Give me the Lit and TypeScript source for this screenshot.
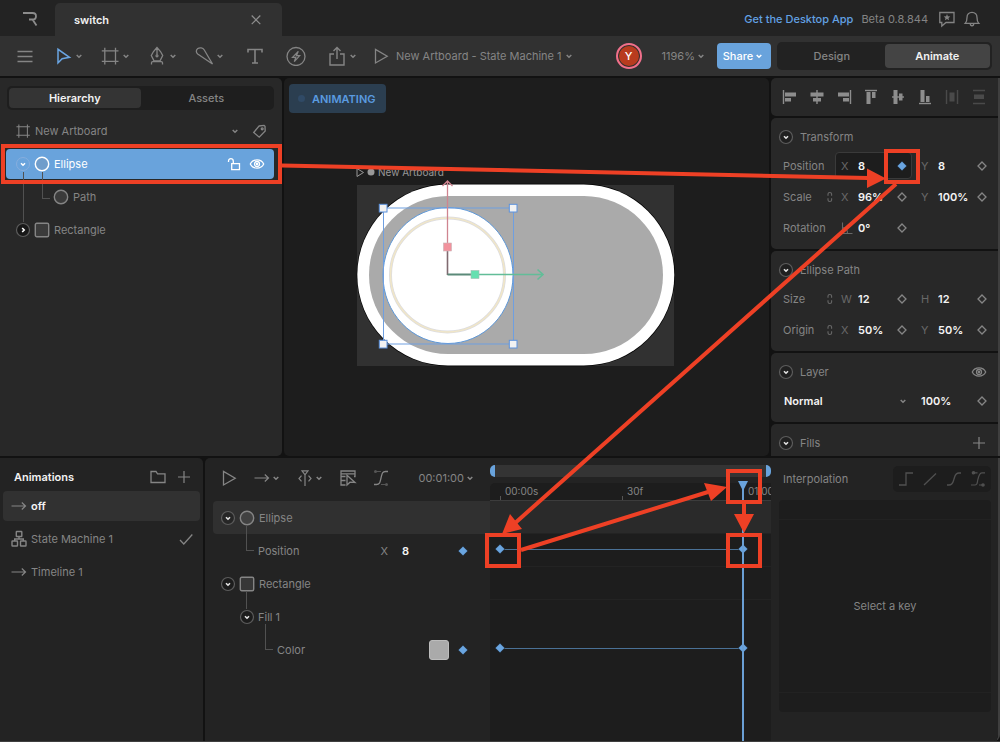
import { LitElement, html, svg, css } from "lit";
import { customElement } from "lit/decorators.js";
import { classMap } from "lit/directives/class-map.js";

const glyphs: Record<string, unknown> = {
  menu: svg`<path d="M2.5 5.500h15M2.5 10.500h15M2.5 15.500h15" stroke-width="1.300" />`,
  cursor: svg`<path d="M5 3.300v13.700l4.100-4.200 7.400-1.500z" stroke="#6aa5e2" stroke-width="1.500" />`,
  artboard: svg`<path d="M1.800 4.800h16.700M1.800 15.300h16.700M4.800 1.800v16.700M15.500 1.800v16.700" stroke-width="1.300" />`,
  pen: svg`<path d="M10 1.500 6.500 5.500 4.300 9.500l2.700 5.300h6l2.700-5.300-2.200-4zM10 1.500v7.300M4.500 18.500v-1.700q0-1.200 1.200-1.200h8.600q1.200 0 1.200 1.200v1.700" stroke-width="1.300" /><circle cx="10" cy="9.800" r="1" stroke-width="1.200" />`,
  brush: svg`<path d="M18.500 18 10.300 4C8.800 1.600 5.700 1.200 3.800 2.600 1.800 4.100 1.900 6.600 3.700 8.100z" stroke-width="1.300" />`,
  text: svg`<path d="M3 6.500V3.500h14v3M10 3.500v13.500M7 17h6" stroke-width="1.600" />`,
  bolt: svg`<circle cx="10" cy="10.500" r="9" stroke-width="1.300" /><path d="M12.300 5.300 6.500 11.300h3.300L8.300 15.700l5.400-6h-3.300z" stroke-width="1.200" />`,
  share: svg`<path d="M7 8H3v11h14V8h-4M10 13V1.500M6.500 5 10 1.500 13.500 5" />`,
  play: svg`<path d="M4.500 3.500v13.500l11.700-6.700z" stroke-width="1.300" />`,
  close: svg`<path d="m5.700 5.500 8.600 8.600m0-8.600-8.600 8.600" stroke-width="1.200" />`,
  chat: svg`<path d="M2.800 3.500h14.200v10H9L4.800 17v-3.500h-2z" stroke-width="1.300" /><path d="m10 5 .9 2.200 2.400.2-1.800 1.500.6 2.300L10 9.900l-2.100 1.300.6-2.300-1.800-1.500 2.400-.2z" fill="currentColor" stroke="none" />`,
  bell: svg`<path d="M3.300 14.300c1.500-1.500 1.700-3 1.700-5.800 0-3 2.100-5.200 5-5.200s5 2.200 5 5.200c0 2.800.2 4.300 1.700 5.800zM8.300 14.800c0 2.600 3.400 2.600 3.400 0" stroke-width="1.300" />`,
  tag: svg`<path d="m10 5 5-.600 1 1 .2 4.600-6 6.200L4.700 11.500z" stroke-width="1.300" /><circle cx="13.200" cy="7.800" r=".9" />`,
  lock: svg`<path d="M7.700 9.700H15.500v6H7.700zM9.300 9.500V7.200c0-3.400-4.800-3.400-4.800 0v.800" stroke-width="1.300" />`,
  eye: svg`<path d="M3.300 10C6 4.500 14 4.500 16.700 10 14 15.500 6 15.500 3.300 10z" stroke-width="1.300" /><circle cx="10" cy="10" r="2.500" stroke-width="1.300" /><circle cx="10" cy="10" r=".6" />`,
  circle: svg`<circle cx="10" cy="10" r="6.700" fill="#8883" />`,
  square: svg`<rect x="3.300" y="3.300" width="13.400" height="13.400" rx="1.500" fill="#8883" />`,
  link: svg`<path d="M8 8.800V7q0-1.500 1.800-1.500T11.600 7v1.800M8 11.200V13q0 1.500 1.800 1.500t1.800-1.500v-1.800" stroke-width="1.100" />`,
  angle: svg`<path d="M5.500 4.500v11h10M5.500 9.500q5 0 5 6" stroke-width="1.100" />`,
  plus: svg`<path d="M10 4v12M4 10h12" stroke-width="1.200" />`,
  folder: svg`<path d="M3 15.500v-11h5l1.500 2.300h7.500v8.700z" stroke-width="1.300" />`,
  arrow: svg`<path d="M2.500 10h14M12.800 6.500l3.700 3.500-3.700 3.500" stroke-width="1.200" />`,
  machine: svg`<rect x="7.300" y="2.500" width="5.500" height="5" rx=".5" /><rect x="3" y="12" width="5.500" height="5" rx=".5" /><rect x="11.500" y="12" width="5.500" height="5" rx=".5" /><path d="M10 7.500V10M5.700 12v-2h8.600v2" />`,
  check: svg`<path d="m4 11 3.800 4L16.300 5.500" stroke-width="1.300" />`,
  snap: svg`<path d="M7 2.800h6l-3 4zM10 6v12M6.500 7.700 4 10.500l2.500 2.800M13.500 7.700l2.500 2.800-2.500 2.800" stroke-width="1.200" />`,
  keys: svg`<path d="M7.500 8.500h-4.500V3h14v5.500h-1M3 5.800h14M7.500 12.500H3M7.500 17H3V8.500" stroke-width="1.300" /><path d="M9 7.300v9.700l3-2.800 5 .300z" stroke-width="1.300" />`,
  curve: svg`<path d="M3 16.500h2.500c3.500 0 3.500-2.500 4.500-6.500s1-6.500 4.500-6.500h2.500" stroke-width="1.300" /><path d="M5 3.500h5M10 16.500h5" stroke="#555" stroke-width="1" /><circle cx="4.500" cy="3.500" r=".8" stroke="#555" /><circle cx="15.500" cy="16.500" r=".8" stroke="#555" />`,
  step: svg`<path d="M3 16h7V4h7" stroke-width="1.300" />`,
  linear: svg`<path d="M4 16 16 4.500" stroke-width="1.300" />`,
  ease: svg`<path d="M3 16h2c4 0 4-3 5-6s1-6 5-6h2" stroke-width="1.300" />`,
  custom: svg`<path d="M3 16h4c3 0 2-3 3-6s1-6.200 4-6.200h3M5.500 3.800h4M11 16h4" stroke-width="1.200" /><circle cx="5.500" cy="3.800" r="1.100" fill="currentColor" /><circle cx="15" cy="16" r="1.100" fill="currentColor" />`,
  chevron: svg`<path d="m7.700 9 2.300 2.300L12.300 9" stroke-width="1.500" />`,
  diamond: svg`<path d="m10 6 4 4-4 4-4-4z" stroke-width="1.300" />`,
  key: svg`<path d="m10 5.200 4.800 4.800-4.800 4.800-4.800-4.800z" fill="#6aa5e0" stroke="#17202b" stroke-width=".6" />`,
  open: svg`<circle cx="10" cy="10" r="6.500" fill="#0003" stroke="#5c5c5c" stroke-width="1.200" /><path d="m8 9.200 2 2 2-2" stroke="#e4e4e4" stroke-width="1.600" />`,
  openLight: svg`<circle cx="10" cy="10" r="6.500" stroke="#86aede" stroke-width="1" /><path d="m8 9.200 2 2 2-2" stroke="#fff" stroke-width="1.500" />`,
  shut: svg`<circle cx="10" cy="10" r="6.500" fill="#0006" stroke="#5c5c5c" stroke-width="1.200" /><path d="m9.200 8 2 2-2 2" stroke="#fff" stroke-width="1.600" />`,
  alignLeft: svg`<path d="M3.500 3v14" /><path d="M5 5.500h11v4H5zM5 11h6v3.500H5z" class="f" />`,
  alignCenter: svg`<path d="M10 3v14" /><path d="M3.500 5.500h13v4h-13zM6 11h8v3.500H6z" class="f" />`,
  alignRight: svg`<path d="M16.500 3v14" /><path d="M4 5.500h11v4H4zM9 11h6v3.500H9z" class="f" />`,
  alignTop: svg`<path d="M4 3.500h12" /><path d="M5.500 5h4v12h-4zM11 5h3.500v6H11z" class="f" />`,
  alignMiddle: svg`<path d="M4 10h12" /><path d="M5.500 3h4v14h-4zM11 6.500h3.500v7H11z" class="f" />`,
  alignBottom: svg`<path d="M4 16.500h12" /><path d="M5.500 3h4v12h-4zM11 9h3.500v6H11z" class="f" />`,
  spreadH: svg`<path d="M4.500 3v14M15.500 3v14" /><path d="M7.500 5.500h5v9h-5z" class="f" />`,
  spreadV: svg`<path d="M4 3.500h12M4 16.500h12" /><path d="M5 7.500h10v4.500H5z" class="f" />`,
};

const icon = (name: string, cls = "") => html`<svg
  class="icon ${cls}"
  viewBox="0 0 20 20"
  aria-hidden="true"
>${glyphs[name]}</svg>`;

const chevron = () => icon("chevron", "chev");

const iconButton = (name: string, label: string, cls = "") =>
  html`<button class="ib ${cls}" aria-label=${label}>${icon(name)}</button>`;

const dropTool = (name: string, label: string) =>
  html`<button class="tool" aria-label=${label}>${icon(name)}${chevron()}</button>`;

const shared = css`
  * {
    box-sizing: border-box;
  }
  button,
  input,
  select {
    font: inherit;
    color: inherit;
    background: none;
    border: 0;
    padding: 0;
    margin: 0;
    border-radius: 0;
  }
  button {
    display: flex;
    align-items: center;
    white-space: nowrap;
  }
  .icon {
    width: 20px;
    height: 20px;
    flex: none;
    display: block;
    fill: none;
    stroke: currentColor;
    stroke-width: 1.4;
  }
  .icon .f {
    fill: currentColor;
    stroke: none;
  }
  .chev {
    width: 20px;
    margin: 0 -4px;
  }
  .spacer {
    flex: 1;
  }
  .seg {
    display: grid;
    grid-template-columns: 1fr 1fr;
    background: #1e1e1e;
    border-radius: 5px;
    padding: 2px;
  }
  .seg button {
    justify-content: center;
    border-radius: 4px;
    font-weight: 500;
  }
  .seg .on {
    color: #f2f2f2;
    background: #343434;
    font-weight: 600;
  }
`;

@customElement("top-bar")
class TopBar extends LitElement {
  static styles = [
    shared,
    css`
      :host {
        display: block;
      }
      .tabs {
        display: flex;
        height: 36px;
        background: #232323;
        padding: 2px 18px 0 0;
        align-items: center;
        color: #838383;
      }
      .home {
        width: 55px;
        justify-content: center;
        color: #8c8c8c;
        padding-left: 5px;
      }
      .tab {
        align-self: flex-end;
        display: flex;
        align-items: center;
        width: 227px;
        height: 33px;
        padding: 0 16px 0 19px;
        border-radius: 5px 5px 0 0;
        background: #313131;
        color: #f2f2f2;
        font-weight: 600;
      }
      .tab .ib {
        color: #8e8e8e;
      }
      .get {
        color: #62a1e4;
        text-decoration: none;
        font-weight: 500;
        margin-right: 8px;
      }
      .beta {
        margin-right: 9px;
      }
      .bell {
        margin-left: 5px;
      }
      .tools {
        display: flex;
        align-items: center;
        height: 40px;
        background: #313131;
        padding: 0 8px 0 15px;
        color: #858585;
      }
      .drops {
        display: flex;
        gap: 15px;
        margin: 0 19px 0 18px;
      }
      .plain {
        display: flex;
        gap: 21px;
        margin-right: 12px;
      }
      .pick {
        gap: 5px;
      }
      .pick .chev {
        margin-left: -8px;
      }
      .avatar {
        width: 26px;
        height: 26px;
        border-radius: 50%;
        border: 2px solid #f0708c;
        background: #b83b1e;
        box-shadow: inset 0 0 0 1px #313131;
        color: #fff;
        font-weight: 500;
        justify-content: center;
        margin-right: 20px;
      }
      .zoom {
        margin-right: 10px;
      }
      .share {
        height: 26px;
        width: 54px;
        justify-content: center;
        border-radius: 4px;
        background: #69a3dc;
        color: #fff;
        font-weight: 500;
        margin-right: 6px;
      }
      .seg {
        width: 215px;
        height: 28px;
        background: #222;
      }
      .seg .on {
        background: #444;
      }
    `,
  ];

  render() {
    return html`
      <header class="tabs">
        <button class="home" aria-label="Home">
          <svg class="icon" viewBox="0 0 20 20" aria-hidden="true">
            <path d="M3 4h9.500q3.500 0 3.500 3.200 0 3.300-3.500 3.300H9M12.500 10.500l4 6" stroke-width="1.800" />
          </svg>
        </button>
        <div class="tab"><span>switch</span><span class="spacer"></span>${iconButton("close", "Close tab")}</div>
        <span class="spacer"></span>
        <a class="get" href="#">Get the Desktop App</a>
        <span class="beta">Beta 0.8.844</span>
        ${iconButton("chat", "Feedback")}${iconButton("bell", "Notifications", "bell")}
      </header>
      <div class="tools">
        ${iconButton("menu", "Menu")}
        <div class="drops">
          ${dropTool("cursor", "Select")} ${dropTool("artboard", "Artboard")}
          ${dropTool("pen", "Pen")} ${dropTool("brush", "Bones")}
        </div>
        <div class="plain">
          ${iconButton("text", "Text")} ${iconButton("bolt", "Events")}
          ${dropTool("share", "Export")}
        </div>
        <button class="pick">${icon("play")}<span>New Artboard - State Machine 1</span>${chevron()}</button>
        <span class="spacer"></span>
        <button class="avatar">Y</button>
        <button class="zoom">1196%${chevron()}</button>
        <button class="share">Share${chevron()}</button>
        <div class="seg"><button>Design</button><button class="on">Animate</button></div>
      </div>
    `;
  }
}

@customElement("hierarchy-panel")
class HierarchyPanel extends LitElement {
  static styles = [
    shared,
    css`
      :host {
        display: flex;
        flex-direction: column;
        background: #282828;
        border-radius: 0 5px 5px 0;
        padding: 8px 8px 0 6px;
        color: #858585;
      }
      .seg {
        height: 24px;
        margin: 0 0 6px 1px;
      }
      .tree {
        display: flex;
        flex-direction: column;
        gap: 3px;
      }
      .row {
        position: relative;
        display: flex;
        align-items: center;
        height: 30px;
        padding: 0 7px;
        border-radius: 4px;
      }
      .row.sel {
        background: #69a3dc;
        color: #fff;
      }
      .child {
        padding-left: 45px;
      }
      .small {
        width: 16px;
        height: 16px;
        margin: 0 1px 0 2px;
      }
      .fold {
        margin-right: -1px;
      }
      .name {
        margin-left: 2px;
      }
      .small + .name {
        margin-left: 3px;
      }
      .end {
        margin-left: 3px;
      }
      .tag {
        margin: 0 -2px 0 8px;
      }
      .child::before {
        content: "";
        position: absolute;
        left: 17px;
        top: -10px;
        height: 50px;
        border-left: 1px solid #515151;
      }
      .child::after {
        content: "";
        position: absolute;
        left: 36px;
        top: -10px;
        width: 7px;
        height: 26px;
        border: solid #515151;
        border-width: 0 0 1px 1px;
      }
    `,
  ];

  render() {
    return html`
      <div class="seg"><button class="on">Hierarchy</button><button>Assets</button></div>
      <div class="tree">
        <div class="row">
          ${icon("artboard", "small")}<span class="name">New Artboard</span><span class="spacer"></span>
          <button aria-label="Artboard options">${chevron()}</button>
          ${iconButton("tag", "Tag", "tag")}
        </div>
        <div class="row sel">
          ${iconButton("openLight", "Collapse Ellipse", "fold")}${icon("circle")}<span class="name">Ellipse</span>
          <span class="spacer"></span>
          ${iconButton("lock", "Lock")}${iconButton("eye", "Visible", "end")}
        </div>
        <div class="row child">${icon("circle")}<span class="name">Path</span></div>
        <div class="row">
          ${iconButton("shut", "Expand Rectangle", "fold")}${icon("square")}<span class="name">Rectangle</span>
        </div>
      </div>
    `;
  }
}

@customElement("stage-view")
class StageView extends LitElement {
  static styles = [
    shared,
    css`
      :host {
        display: block;
        position: relative;
        overflow: hidden;
        background: #1d1d1d;
        border-radius: 5px;
        padding: 6px 5px;
      }
      .mode {
        display: inline-flex;
        align-items: center;
        gap: 7px;
        height: 29px;
        padding: 0 10px 0 9px;
        border-radius: 4px;
        background: #2b3e50;
        color: #5a9be0;
        font-weight: 600;
      }
      .dot {
        width: 7px;
        height: 7px;
        border-radius: 50%;
        background: #304a66;
      }
      .art {
        position: absolute;
        inset: 0;
        width: 100%;
        height: 100%;
        pointer-events: none;
      }
      .label {
        fill: #999;
        font-size: 10px;
      }
    `,
  ];

  render() {
    const handles = [
      [383, 208],
      [513, 208],
      [383, 344],
      [513, 344],
    ];
    return html`
      <div class="mode"><span class="dot"></span>ANIMATING</div>
      <svg class="art" role="img" aria-label="Switch artboard">
        <g transform="translate(-284 -78)" fill="none">
          <path d="M357 168.500v8l6.500-4z" stroke="#999" />
          <circle cx="371" cy="172" r="3.500" fill="#999" />
          <text class="label" x="378" y="176">New Artboard</text>
          <rect x="357" y="185" width="317" height="181" fill="#313131" />
          <rect x="356.700" y="183.700" width="318.300" height="182.600" rx="91.300" fill="#000" />
          <rect x="357.300" y="184.400" width="317" height="181.200" rx="90.600" fill="#fff" />
          <rect x="369" y="196" width="294" height="158" rx="79" fill="#aaa" />
          <ellipse cx="448" cy="275.500" rx="65" ry="68" fill="#fff" stroke="#5c97d8" />
          <circle cx="447.500" cy="275" r="57" stroke="#dcdce0" stroke-width="3" />
          <circle cx="447.500" cy="275" r="57" stroke="#f0e6c8" stroke-width="1.600" />
          <rect x="383.500" y="208" width="130" height="136" stroke="#6f9fe0" />
          ${handles.map(
            ([x, y]) => svg`<rect x=${x - 3.7} y=${y - 3.7} width="7.700" height="7.700" fill="#f2f2f2" stroke="#5c92dd" />`,
          )}
          <path d="M447.500 275v-24" stroke="#806a70" stroke-width="1.600" />
          <path d="M447.500 251v-70M442.500 186l5-5 5 5" stroke="#cf8490" stroke-width="1.300" />
          <path d="M447.500 274.500h26" stroke="#5b8a79" stroke-width="2" />
          <path d="M475 274.500h68M537.500 269.500l5.500 5-5.500 5" stroke="#62bd98" stroke-width="1.600" />
          <rect x="443.500" y="243" width="8" height="8" fill="#f2929d" stroke="#c9b5b8" stroke-width=".6" />
          <rect x="471" y="270.500" width="8" height="8" fill="#65e0b0" stroke="#a5bdb4" stroke-width=".6" />
        </g>
      </svg>
    `;
  }
}

type Field = { axis: string; value: string; keyed?: boolean };
type Prop = { name: string; link?: boolean; angle?: boolean; fields: Field[] };

@customElement("inspector-panel")
class InspectorPanel extends LitElement {
  static styles = [
    shared,
    css`
      :host {
        display: flex;
        flex-direction: column;
        gap: 2px;
        min-height: 0;
        overflow: hidden;
        color: #858585;
      }
      .card {
        flex: none;
        background: #282828;
        border-radius: 5px 0 0 5px;
        padding: 5px 6px 6px 12px;
      }
      .aligns {
        display: flex;
        justify-content: space-between;
        align-items: center;
        padding: 9px;
        color: #8d8d8d;
      }
      .faint {
        color: #4a4a4a;
      }
      .title {
        display: flex;
        align-items: center;
        height: 27px;
        margin-left: -7px;
      }
      .title h2 {
        margin: 0 auto 0 4px;
        font: inherit;
      }
      .title .end {
        margin-right: 3px;
      }
      .row {
        display: grid;
        grid-template-columns: 42px 10px 77px 77px;
        align-items: center;
        height: 31px;
      }
      .mid {
        display: flex;
        justify-content: center;
        color: #686868;
      }
      .field {
        display: flex;
        align-items: center;
        height: 27px;
        width: 77px;
        border: 1px solid transparent;
        border-radius: 4px;
        padding-left: 5px;
      }
      .field.second {
        margin-left: 3px;
      }
      .field.keyed {
        background: #1d1d1d;
        border-color: #3a3a3a;
      }
      .axis {
        width: 17px;
        flex: none;
        color: #686868;
      }
      .axis .icon {
        margin-left: -4px;
      }
      input {
        flex: 1;
        min-width: 0;
        width: 0;
        color: #f4f4f4;
        font-weight: 600;
      }
      .field .ib {
        margin-right: -1px;
      }
      .blend {
        display: flex;
        align-items: center;
        height: 31px;
        color: #f4f4f4;
        font-weight: 600;
      }
      .blend select {
        appearance: none;
        width: 114px;
        padding-left: 1px;
      }
      .blend .chev {
        color: #858585;
      }
      .blend input {
        margin-left: 12px;
      }
      .blend .ib {
        color: #858585;
      }
    `,
  ];

  private head(title: string, end: unknown = null) {
    return html`<div class="title">${iconButton("open", `Toggle ${title}`)}
      <h2>${title}</h2>
      ${end}
    </div>`;
  }

  private row(p: Prop) {
    return html`<div class="row">
      <span>${p.name}</span>
      <span class="mid">${p.link ? icon("link") : null}</span>
      ${p.fields.map(
        (f, i) => html`<div class=${classMap({ field: true, keyed: !!f.keyed, second: i === 1 })}>
          <span class="axis">${p.angle ? icon("angle") : f.axis}</span>
          <input aria-label="${p.name} ${f.axis}" .value=${f.value} />
          ${iconButton(f.keyed ? "key" : "diamond", "Set key")}
        </div>`,
      )}
    </div>`;
  }

  render() {
    const pair = (name: string, a: string, x: string, b: string, y: string, keyed = false): Prop => ({
      name,
      link: !keyed,
      fields: [
        { axis: a, value: x, keyed },
        { axis: b, value: y },
      ],
    });
    return html`
      <div class="card aligns">
        ${["Left", "Center", "Right", "Top", "Middle", "Bottom"].map((n) => iconButton(`align${n}`, `Align ${n}`))}
        ${iconButton("spreadH", "Distribute horizontally", "faint")}
        ${iconButton("spreadV", "Distribute vertically", "faint")}
      </div>
      <section class="card">
        ${this.head("Transform")} ${this.row(pair("Position", "X", "8", "Y", "8", true))}
        ${this.row(pair("Scale", "X", "96%", "Y", "100%"))}
        ${this.row({ name: "Rotation", angle: true, fields: [{ axis: "", value: "0°" }] })}
      </section>
      <section class="card">
        ${this.head("Ellipse Path")} ${this.row(pair("Size", "W", "12", "H", "12"))}
        ${this.row(pair("Origin", "X", "50%", "Y", "50%"))}
      </section>
      <section class="card">
        ${this.head("Layer", iconButton("eye", "Layer visible", "end"))}
        <div class="blend">
          <select aria-label="Blend mode"><option>Normal</option></select>
          ${chevron()}
          <input aria-label="Opacity" .value=${"100%"} />
          ${iconButton("diamond", "Set opacity key")}
        </div>
      </section>
      <section class="card">${this.head("Fills", iconButton("plus", "Add fill", "end"))}</section>
    `;
  }
}

@customElement("animation-list")
class AnimationList extends LitElement {
  static styles = [
    shared,
    css`
      :host {
        display: flex;
        flex-direction: column;
        gap: 3px;
        padding: 8px 3px;
        background: #232323;
        border-radius: 0 5px 0 0;
        color: #858585;
      }
      .top {
        display: flex;
        align-items: center;
        height: 22px;
        padding: 0 6px 0 11px;
        gap: 6px;
      }
      h2 {
        margin: 0 auto 0 0;
        font: inherit;
        font-weight: 600;
        color: #f2f2f2;
      }
      .item {
        height: 30px;
        padding: 0 4px 0 6px;
        border-radius: 4px;
        gap: 2px;
      }
      .item.on {
        background: #313131;
        color: #f4f4f4;
        font-weight: 600;
      }
      .on .icon {
        color: #858585;
      }
    `,
  ];

  render() {
    return html`
      <div class="top">
        <h2>Animations</h2>
        ${iconButton("folder", "New folder")}${iconButton("plus", "New animation")}
      </div>
      <button class="item on">${icon("arrow")}off</button>
      <button class="item">${icon("machine")}State Machine 1<span class="spacer"></span>${icon("check")}</button>
      <button class="item">${icon("arrow")}Timeline 1</button>
    `;
  }
}

const DURATION = 60;
const frameLeft = (frame: number) => 10 + Math.round((frame / DURATION) * 243);

@customElement("time-line")
class TimeLine extends LitElement {
  static styles = [
    shared,
    css`
      :host {
        display: grid;
        grid-template-columns: 285px 1fr;
        background: #232323;
        border-radius: 5px 0 0 0;
        color: #858585;
        min-width: 0;
      }
      .bar {
        display: flex;
        align-items: center;
        gap: 13px;
        height: 43px;
        padding: 0 14px 4px;
      }
      .tool .chev {
        margin-left: -6px;
      }
      .time {
        margin-left: auto;
      }
      .row {
        position: relative;
        display: flex;
        align-items: center;
        height: 33px;
        padding: 0 17px 0 13px;
      }
      .row.sel {
        margin-left: 8px;
        padding-left: 5px;
        background: #303030;
        border-radius: 4px 0 0 4px;
      }
      .fold {
        margin-right: -1px;
      }
      .name {
        margin-left: 2px;
      }
      .in1 {
        padding-left: 53px;
      }
      .in2 {
        padding-left: 32px;
      }
      .in3 {
        padding-left: 72px;
      }
      .elbow::before,
      .stem::before {
        content: "";
        position: absolute;
        left: 41px;
        top: -9px;
        width: 7px;
        height: 25px;
        border: solid #515151;
        border-width: 0 0 1px 1px;
      }
      .in3::before {
        left: 60px;
      }
      .stem::before {
        width: 0;
        height: 18px;
        border-width: 0 0 0 1px;
      }
      .axis {
        margin-left: auto;
      }
      .val {
        width: 48px;
        margin: 0 3px 0 14px;
        color: #f4f4f4;
        font-weight: 600;
      }
      .swatch {
        width: 20px;
        height: 20px;
        margin: 0 4px 0 auto;
        border-radius: 3px;
        background: #aaa;
        border: 1px solid #bdbdbd;
      }
      .tracks {
        position: relative;
        display: flex;
        flex-direction: column;
        min-width: 0;
        overflow: hidden;
      }
      .work {
        display: flex;
        justify-content: space-between;
        height: 12px;
        margin: 7px 0 6px;
        background: #343434;
        border-radius: 6px;
      }
      .grip {
        width: 5px;
        height: 12px;
        background: #69a3dc;
        border-radius: 6px 0 0 6px;
      }
      .grip.r {
        border-radius: 0 6px 6px 0;
      }
      .ruler {
        position: relative;
        height: 18px;
        background: #1d1d1d;
        border-bottom: 1px solid #3c3c3c;
        border-radius: 5px 0 0 0;
        font-size: 10px;
      }
      .tick {
        position: absolute;
        bottom: 0;
        height: 18px;
        padding-left: 5px;
        line-height: 18px;
        white-space: nowrap;
      }
      .tick::before {
        content: "";
        position: absolute;
        left: 0;
        bottom: 0;
        height: 4px;
        border-left: 1px solid #555;
      }
      .lane {
        position: relative;
        height: 33px;
        background: #1d1d1d;
        border-bottom: 1px solid #232323;
      }
      .lane.sel {
        background: #2a2a2a;
      }
      .lane.clear {
        border-color: #1d1d1d;
      }
      .rest {
        flex: 1;
        background: #1d1d1d;
      }
      .span {
        position: absolute;
        top: 15px;
        height: 1px;
        background: #4a7196;
      }
      .key {
        position: absolute;
        top: 5px;
        margin-left: -10px;
      }
      .head {
        position: absolute;
        top: 23px;
        bottom: 0;
        width: 2px;
        margin-left: -1px;
        background: #6a9fd4;
      }
      .head::before {
        content: "";
        position: absolute;
        left: -4px;
        top: 0;
        border: 5px solid transparent;
        border-top: 10px solid #69a3dc;
        border-bottom: 0;
      }
    `,
  ];

  private keys() {
    return html`
      <span class="span" style="left:${frameLeft(0)}px;width:${frameLeft(DURATION) - frameLeft(0)}px"></span>
      ${[0, DURATION].map(
        (f) => html`<button class="key" aria-label="Key at frame ${f}" style="left:${frameLeft(f)}px">${icon("key")}</button>`,
      )}
    `;
  }

  render() {
    const ticks: [number, string][] = [
      [0, "00:00s"],
      [30, "30f"],
      [60, "01:00"],
    ];
    return html`
      <div>
        <div class="bar">
          ${iconButton("play", "Play")} ${dropTool("arrow", "Playback mode")} ${dropTool("snap", "Snapping")}
          ${iconButton("keys", "Key all")} ${iconButton("curve", "Curves")}
          <button class="time">00:01:00${chevron()}</button>
        </div>
        <div class="row sel">
          ${iconButton("open", "Collapse Ellipse", "fold")}${icon("circle")}<span class="name">Ellipse</span>
        </div>
        <div class="row in1 elbow">
          <label for="pos">Position</label><span class="axis">X</span>
          <input class="val" id="pos" .value=${"8"} />${iconButton("key", "Position key")}
        </div>
        <div class="row">
          ${iconButton("open", "Collapse Rectangle", "fold")}${icon("square")}<span class="name">Rectangle</span>
        </div>
        <div class="row in2 stem">${iconButton("open", "Collapse Fill", "fold")}<span class="name">Fill 1</span></div>
        <div class="row in3 elbow">
          <span>Color</span><button class="swatch" aria-label="Color"></button>${iconButton("key", "Color key")}
        </div>
      </div>
      <div class="tracks">
        <div class="work"><span class="grip"></span><span class="grip r"></span></div>
        <div class="ruler">
          ${ticks.map(([f, t]) => html`<span class="tick" style="left:${frameLeft(f)}px">${t}</span>`)}
        </div>
        <div class="lane sel"></div>
        <div class="lane">${this.keys()}</div>
        <div class="lane"></div>
        <div class="lane clear"></div>
        <div class="lane clear">${this.keys()}</div>
        <div class="rest"></div>
        <div class="head" style="left:${frameLeft(DURATION)}px"></div>
      </div>
    `;
  }
}

@customElement("interpolation-panel")
class InterpolationPanel extends LitElement {
  static styles = [
    shared,
    css`
      :host {
        display: flex;
        flex-direction: column;
        gap: 8px;
        padding: 8px 7px 0 8px;
        background: #232323;
        color: #858585;
      }
      .top {
        display: flex;
        align-items: center;
        justify-content: space-between;
        padding-left: 4px;
      }
      .modes {
        display: flex;
        justify-content: space-between;
        width: 98px;
        padding: 3px;
        border-radius: 5px;
        background: #1d1d1d;
        color: #505050;
      }
      .graph {
        display: grid;
        place-items: center;
        grid-template-rows: 19px 1fr 19px;
        aspect-ratio: 1;
        background: #1d1d1d;
        border-radius: 4px;
      }
      .graph span {
        width: 100%;
        height: 100%;
        display: grid;
        place-items: center;
        border: solid #222;
        border-width: 1px 0;
        grid-row: 2;
      }
    `,
  ];

  render() {
    return html`
      <div class="top">
        <span>Interpolation</span>
        <div class="modes">
          ${iconButton("step", "Hold")}${iconButton("linear", "Linear")}${iconButton("ease", "Cubic")}${iconButton("custom", "Custom")}
        </div>
      </div>
      <div class="graph"><span>Select a key</span></div>
    `;
  }
}

@customElement("callout-layer")
class CalloutLayer extends LitElement {
  static styles = css`
    :host {
      position: absolute;
      inset: 0;
      pointer-events: none;
      overflow: hidden;
    }
    .marks {
      width: 100%;
      height: 100%;
      display: block;
      fill: none;
      stroke: #ee4025;
      stroke-width: 4;
    }
    .tip {
      fill: #ee4025;
      stroke: none;
    }
  `;

  render() {
    return html`<svg class="marks" aria-hidden="true">
      <rect x="3" y="146" width="277" height="36" />
      <rect x="886" y="151" width="32" height="31" />
      <rect x="487" y="535" width="32" height="31" />
      <rect x="728" y="471" width="32" height="31" />
      <rect x="728" y="535" width="32" height="31" />
      <path d="M282 165.500 868 178M896 184 514 524M521 550 708 492M744 504v11" />
      <path class="tip" d="M867 168.500v19.500l19-9.500zM510 514l12 15-20 5zM704 483l7 18 16-14zM734 514h20l-10 19z" />
    </svg>`;
  }
}

@customElement("app-root")
class AppRoot extends LitElement {
  static styles = css`
    :host {
      position: relative;
      display: grid;
      box-sizing: border-box;
      grid-template-rows: auto minmax(0, 378fr) minmax(0, 283fr);
      row-gap: 2px;
      height: 100vh;
      min-height: 640px;
      background: #121212;
      font-family: Inter, "Liberation Sans", sans-serif;
      font-size: 11px;
      line-height: 16px;
      border-bottom: 1px solid #3f3f3f;
      overflow: hidden;
    }
    .main {
      display: grid;
      grid-template-columns: 282px minmax(0, 1fr) 227px;
      column-gap: 2px;
      border-right: 2px solid #3f3f3f;
      min-height: 0;
    }
    .bottom {
      display: grid;
      grid-template-columns: 203px minmax(0, 1fr) 227px;
      border-right: 2px solid #3f3f3f;
      border-radius: 0 0 6px 0;
      min-height: 0;
      overflow: hidden;
    }
    .bottom time-line {
      margin-left: 2px;
    }
  `;

  render() {
    return html`
      <top-bar></top-bar>
      <div class="main">
        <hierarchy-panel></hierarchy-panel>
        <stage-view></stage-view>
        <inspector-panel></inspector-panel>
      </div>
      <div class="bottom">
        <animation-list></animation-list>
        <time-line></time-line>
        <interpolation-panel></interpolation-panel>
      </div>
      <callout-layer></callout-layer>
    `;
  }
}
